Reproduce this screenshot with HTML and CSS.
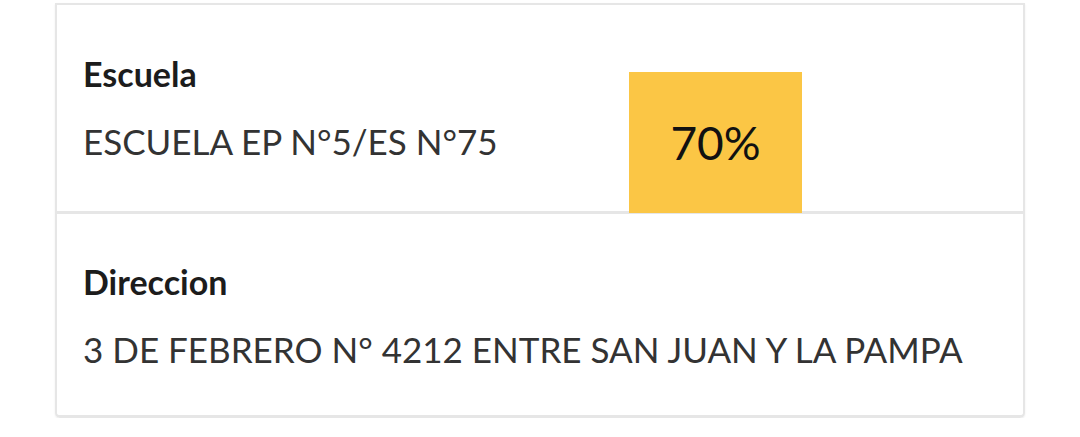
FILE: index.html
```html
<!DOCTYPE html>
<html lang="es">
<head>
<meta charset="utf-8">
<title>Escuela</title>
<link rel="stylesheet" href="styles.css">
</head>
<body>
<div class="card">
  <div class="row">
    <div class="field">
      <div class="label">Escuela</div>
      <div class="value">ESCUELA EP N°5/ES N°75</div>
    </div>
    <!-- porcentaje de avance -->
    <div class="badge">70%</div>
  </div>
  <div class="row">
    <div class="field">
      <div class="label">Direccion</div>
      <div class="value">3 DE FEBRERO N° 4212 ENTRE SAN JUAN Y LA PAMPA</div>
    </div>
  </div>
</div>
</body>
</html>
```

FILE: styles.css
```css
body {
  margin: 0;
  background: #fff;
  font-family: Lato, "Liberation Sans", sans-serif;
}

.card {
  margin: 3px 0 0 55px;
  width: 966px;
  border: 2px solid #e6e6e6;
  border-bottom-width: 3px;
  border-radius: 0 0 5px 5px;
  box-shadow: 0 1px 2px rgba(0, 0, 0, 0.08);
}

.row {
  position: relative;
  height: 206px;
  box-sizing: border-box;
  padding: 49px 26px 0;
}
.row + .row {
  border-top: 3px solid #e6e6e6;
  height: 204px;
  padding-top: 48px;
}

.label {
  font-size: 34px;
  line-height: 40px;
  font-weight: 700;
  color: #1c1c1c;
}

.value {
  margin-top: 26px;
  font-size: 35px;
  line-height: 42px;
  color: #333;
}

/* badge sits over the divider below it */
.badge {
  position: absolute;
  left: 572px;
  top: 67px;
  width: 173px;
  height: 141px;
  background: #fbc645;
  color: #111;
  font-size: 46px;
  display: flex;
  align-items: center;
  justify-content: center;
  z-index: 1;
}
```
